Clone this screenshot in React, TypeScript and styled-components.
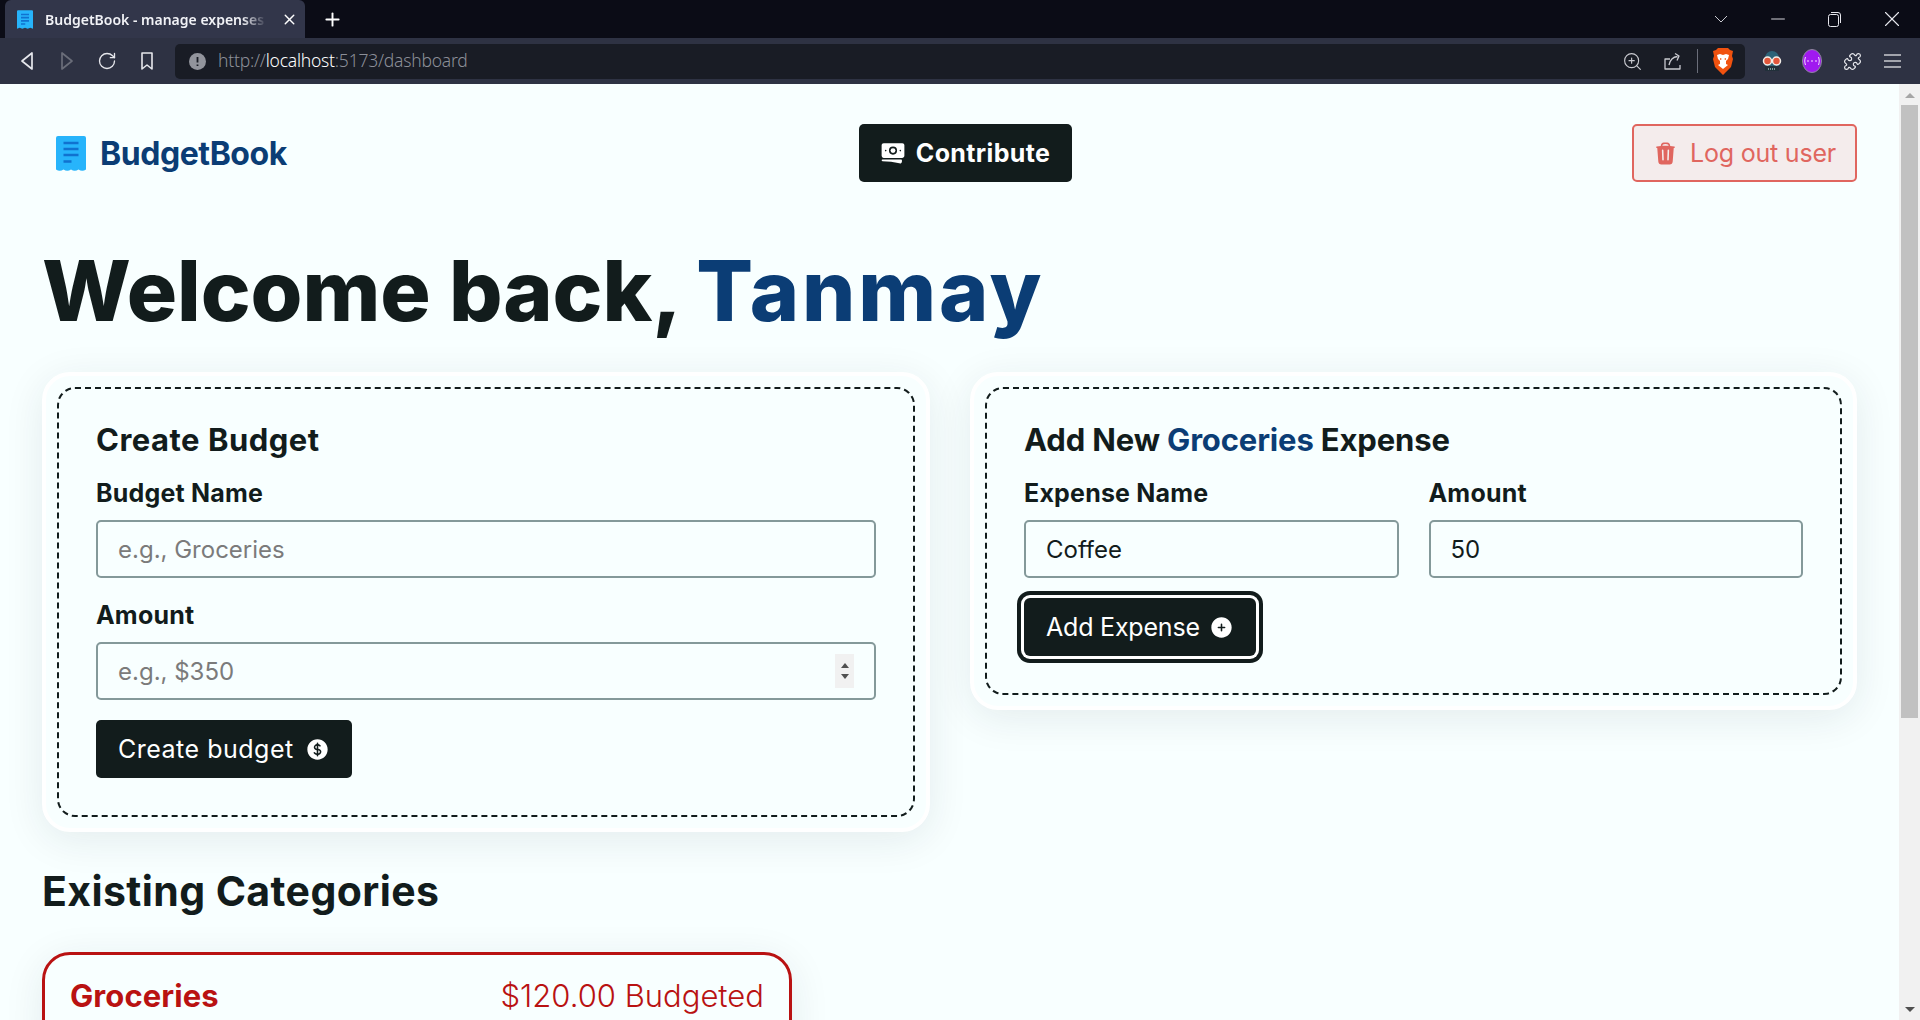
import React from 'react';
import styled, { createGlobalStyle } from 'styled-components';
import { Minus, Plus, Puzzle, RotateCw, X, ZoomIn } from 'lucide-react';
import { HiBanknotes, HiCurrencyDollar, HiPlusCircle, HiTrash } from 'react-icons/hi2';

const ink = '#121c1c';
const navy = '#0b3d75';
const paper = '#f8ffff';
const danger = '#b91212';

const Global = createGlobalStyle`
  html, body { margin: 0; height: 100%; overflow: hidden; }
  body { font-family: Inter, "Liberation Sans", sans-serif; color: ${ink}; background: ${paper}; }
  * { box-sizing: border-box; }
`;

const Shell = styled.div`height: 1020px; display: flex; flex-direction: column;`;

/* browser chrome */
const TabBar = styled.div`
  height: 38px; flex: none; background: #0b0c16; display: flex; align-items: center; padding-left: 5px; color: #fff;
`;
const Tab = styled.div`
  width: 300px; height: 38px; background: #32364a; border-radius: 6px 6px 0 0; display: flex; align-items: center;
  padding: 0 7px 0 12px; gap: 12px;
`;
const TabTitle = styled.span`
  flex: 1; overflow: hidden; white-space: nowrap; font: 600 14px "Noto Sans", sans-serif; color: #f1f2f6;
  mask-image: linear-gradient(90deg, #000 88%, transparent 99%);
`;
const NewTab = styled.span`display: flex; margin-left: 17px;`;
const WindowControls = styled.div`margin-left: auto; display: flex; align-items: center; color: #e8e8ee;`;
const WindowSlot = styled.span`width: 57px; display: flex; justify-content: center;`;
const ToolBar = styled.div`
  height: 46px; flex: none; background: #2e3243; display: flex; align-items: center; padding-left: 7px; color: #e6e7ec;
`;
const NavIcons = styled.div`display: flex; align-items: center; width: 168px;`;
const IconSlot = styled.span`width: 40px; display: flex; justify-content: center; align-items: center;`;
const UrlBar = styled.div`
  width: 1570px; height: 35px; background: #191c25; border-radius: 5px; display: flex; align-items: center;
  padding: 0 12px 0 14px; gap: 12px;
`;
const UrlText = styled.span`font: 300 17.5px "Noto Sans", sans-serif; color: #8c8f98; letter-spacing: -0.22px; white-space: nowrap; position: relative; top: -1px; b { font-weight: 300; color: #fff; }`;
const UrlTools = styled.div`margin-left: auto; display: flex; align-items: center; gap: 15px; color: #c9cad0;`;
const ZoomSlot = styled.span`display: flex; margin-right: 6px;`;
const Divider = styled.span`width: 1px; height: 24px; background: #6b6e7a;`;
const Extensions = styled.div`display: flex; align-items: center; margin-left: 7px;`;

/* page */
const Body = styled.div`flex: 1; display: flex; min-height: 0;`;
const Page = styled.main`flex: 1; min-width: 0; overflow: hidden; background: ${paper}; padding: 0 42px;`;
const ScrollTrack = styled.div`
  width: 21px; flex: none; background: #f1f1f1; display: flex; flex-direction: column; align-items: center; padding: 21px 2px 0;
`;
const ScrollThumb = styled.div`width: 17px; height: 613px; background: #c1c1c1;`;
const ScrollArrow = styled.span<{ $up?: boolean }>`
  width: 0; height: 0; border-left: 5px solid transparent; border-right: 5px solid transparent;
  ${p => p.$up ? `border-bottom: 5px solid #a6a6a6; margin-top: -12px; margin-bottom: 7px;` : `border-top: 5px solid #505050; margin-top: auto; margin-bottom: 8px;`}
`;

const Nav = styled.nav`display: flex; align-items: center; justify-content: space-between; padding-top: 40px;`;
const Brand = styled.a`
  display: flex; align-items: center; gap: 14px; padding-left: 14px; width: 256px; font-weight: 700; font-size: 32px;
  letter-spacing: -0.45px; color: ${navy};
`;
const BaseButton = styled.button`
  display: inline-flex; align-items: center; border: none; border-radius: 5px; background: ${ink}; color: #fff;
  font-family: inherit; cursor: pointer; flex: none;
`;
const ContributeButton = styled(BaseButton)`
  width: 213px; height: 58px; justify-content: center; gap: 10px; font-weight: 700; font-size: 25px; letter-spacing: 0.35px;
`;
const LogoutButton = styled(BaseButton)`
  width: 225px; height: 58px; justify-content: center; gap: 12px; background: #f4ecec; border: 2.5px solid #e0665f;
  color: #e0665f; font-size: 25px; font-weight: 400; letter-spacing: -0.2px;
`;

const Heading = styled.h1`
  margin: 63px 0 35px; font-size: 84px; line-height: 1.1; font-weight: 800; letter-spacing: -0.1px; white-space: nowrap;
  span { color: ${navy}; letter-spacing: 2.8px; }
`;
const Columns = styled.div`display: grid; grid-template-columns: 888px 887px; gap: 40px; align-items: start;`;
const Card = styled.section`
  padding: 11px; border: 4px solid #fff; border-radius: 28px; background: ${paper};
  box-shadow: 0 8px 40px rgba(18, 40, 60, 0.09);
`;
const Dashed = styled.div`border: 2px dashed ${ink}; border-radius: 18px; padding: 35px 37px 37px; display: flex; flex-direction: column; gap: 24px;`;
const CardTitle = styled.h2<{ $tight?: boolean }>`
  margin: 0; font-size: 31px; line-height: 32px; font-weight: 700; letter-spacing: ${p => (p.$tight ? '-0.15px' : '0.5px')};
  span { color: ${navy}; }
`;
const Field = styled.label`display: flex; flex-direction: column; gap: 14px; flex: 1; min-width: 0;`;
const FieldLabel = styled.span`font-size: 25px; line-height: 26px; font-weight: 700; letter-spacing: 0.2px;`;
const FieldRow = styled.div`display: flex; gap: 30px;`;
const InputWrap = styled.div`position: relative;`;
const Input = styled.input`
  display: block; width: 100%; height: 58px; padding: 0 20px; border: 2px solid #84999a; border-radius: 5px; background: ${paper};
  font: 400 24px Inter, sans-serif; color: ${ink}; outline: none;
  &::placeholder { color: #7b7b7b; opacity: 1; }
  &::-webkit-inner-spin-button { display: none; }
`;
const Spinner = styled.span`
  position: absolute; right: 22px; top: 50%; transform: translateY(-50%); width: 19px; height: 34px; background: #f1f1f1;
  display: flex; flex-direction: column; align-items: center; justify-content: center; gap: 6px;
`;
const SpinArrow = styled.i<{ $down?: boolean }>`
  width: 0; height: 0; border-left: 4.500px solid transparent; border-right: 4.500px solid transparent;
  ${p => p.$down ? 'border-top: 5px solid #505050;' : 'border-bottom: 5px solid #505050;'}
`;
const SubmitButton = styled(BaseButton)<{ $focused?: boolean }>`
  align-self: flex-start; height: 58px; margin-top: -4px; padding: 0 22px; font-size: 25px; font-weight: 400;
  gap: ${p => (p.$focused ? '9px' : '11px')};
  letter-spacing: ${p => (p.$focused ? '-0.2px' : '0.5px')};
  ${p => p.$focused ? `box-shadow: 0 0 0 3px #fff, 0 0 0 7px ${ink}; border-radius: 6px;` : ''}
`;

const SectionTitle = styled.h2`margin: 37px 0 38px; font-size: 41px; line-height: 1.1; font-weight: 700; letter-spacing: 0.4px;`;
const BudgetCard = styled.article`
  width: 750px; height: 200px; border: 3px solid ${danger}; border-radius: 28px; padding: 19px 25px; color: ${danger};
  background: ${paper}; box-shadow: 0 8px 40px rgba(18, 40, 60, 0.09);
`;
const BudgetHead = styled.div`display: flex; justify-content: space-between; align-items: center;`;
const BudgetName = styled.h3`margin: 0; font-size: 31px; line-height: 1.4; font-weight: 700; letter-spacing: 0.1px;`;
const BudgetTotal = styled.p`margin: 0; font-size: 31px; line-height: 1.4; font-weight: 300; letter-spacing: 0;`;

const ReceiptLogo = () => (
  <svg width="30" height="35" viewBox="0 0 30 35" fill="none">
    <path d="M2 0h26a2 2 0 0 1 2 2v31.500c-2.500 1.800-5 1.800-7.500 0-2.500 1.800-5 1.800-7.500 0-2.500 1.800-5 1.800-7.500 0-2.500 1.800-5 1.800-7.500 0V2a2 2 0 0 1 2-2z" fill="#27b4fb" />
    <path d="M7.500 7h15M7.500 13h15M7.500 19h15M7.500 25.500h8" stroke="#1072d0" strokeWidth="2.600" />
  </svg>
);
const TabFavicon = () => (
  <svg width="16" height="19" viewBox="0 0 30 35" fill="none">
    <path d="M2 0h26a2 2 0 0 1 2 2v33l-5-2-5 2-5-2-5 2-5-2-5 2V2a2 2 0 0 1 2-2z" fill="#27b4fb" />
    <path d="M7.500 8h15M7.500 14h15M7.500 20h15M7.500 26h8" stroke="#1072d0" strokeWidth="3" />
  </svg>
);
const BackIcon = ({ flip, dim }: { flip?: boolean; dim?: boolean }) => (
  <svg width="14" height="20" viewBox="0 0 14 20" fill="none" stroke={dim ? '#6a6d79' : '#e6e7ec'} strokeWidth="1.700" strokeLinejoin="round" style={{ transform: flip ? 'scaleX(-1)' : undefined }}>
    <path d="M12 2v16L2 10z" />
  </svg>
);
const BookmarkIcon = () => (
  <svg width="14" height="20" viewBox="0 0 14 20" fill="none" stroke="#e6e7ec" strokeWidth="1.600" strokeLinejoin="round">
    <path d="M2 2h10v16l-5-4-5 4z" />
  </svg>
);
const AlertDot = () => (
  <svg width="17" height="17" viewBox="0 0 17 17">
    <circle cx="8.500" cy="8.500" r="8.500" fill="#92949c" />
    <path d="M8.500 4v5.500M8.500 11.500v1.500" stroke="#191c25" strokeWidth="1.800" />
  </svg>
);
const ShareIcon = () => (
  <svg width="18" height="18" viewBox="0 0 18 18" fill="none" stroke="#c9cad0" strokeWidth="1.300" strokeLinejoin="round">
    <path d="M6 7H1v10h15v-4M5 13C6 8 9 5 13.500 4.500M11 1.500l4 2.500-2 4.500" />
  </svg>
);
const BraveIcon = () => (
  <svg width="20" height="27" viewBox="0 0 20 27">
    <path d="M5 0h10l2 2 3 1-1 5 1 3-2 8-5 5-3 3-3-3-5-5-2-8 1-3-1-5 3-1z" fill="#f1520f" />
    <path d="M4 7l3-1 3 1 3-1 3 1-1 4-2 2v3l2 1-5 4-5-4 2-1v-3l-2-2z" fill="#fff" />
    <path d="M7 10l2 1-2 1zM13 10l-2 1 2 1z" fill="#f1520f" />
  </svg>
);
const GogglesIcon = () => (
  <svg width="20" height="24" viewBox="0 0 20 24">
    <path d="M3 22V9a7 7 0 0 1 14 0v13z" fill="#2d6378" />
    <path d="M3 17h14v5H3z" fill="#22303a" />
    <circle cx="5.500" cy="12" r="4" fill="#e2573b" stroke="#f3efe9" strokeWidth="1.500" />
    <circle cx="14.500" cy="12" r="4" fill="#e2573b" stroke="#f3efe9" strokeWidth="1.500" />
    <path d="M6 20h8" stroke="#cfe" strokeWidth="1.200" strokeDasharray="1 1" />
  </svg>
);
const PurpleIcon = () => (
  <svg width="20" height="24" viewBox="0 0 20 24">
    <ellipse cx="10" cy="12" rx="9.500" ry="11.500" fill="#a019f0" stroke="#8d8a9c" strokeWidth="1" />
    <path d="M5 12h2M13 12h2M9 12h2" stroke="#f4dcff" strokeWidth="1.200" />
    <path d="M3.500 8c-1 3-1 5 0 8M16.500 8c1 3 1 5 0 8" stroke="#f4dcff" strokeWidth="1" fill="none" />
  </svg>
);
const RestoreIcon = () => (
  <svg width="13" height="15" viewBox="0 0 13 15" fill="none" stroke="#e8e8ee" strokeWidth="1">
    <rect x="0.500" y="2.500" width="10" height="12" rx="2" />
    <path d="M3 .5h7a2.500 2.500 0 0 1 2.500 2.500v8" />
  </svg>
);
const MenuIcon = () => (
  <svg width="17" height="14" viewBox="0 0 17 14" stroke="#c9cad0" strokeWidth="1.500">
    <path d="M0 1h17M0 7h17M0 13h17" />
  </svg>
);
const ChevronThin = () => (
  <svg width="14" height="8" viewBox="0 0 14 8" fill="none" stroke="#c9cad0" strokeWidth="1">
    <path d="M1 1l6 6 6-6" />
  </svg>
);

export default function App() {
  return (
    <Shell>
      <Global />
      <TabBar>
        <Tab>
          <TabFavicon />
          <TabTitle>BudgetBook - manage expenses and budgets</TabTitle>
          <X size={17} strokeWidth={2} />
        </Tab>
        <NewTab><Plus size={21} strokeWidth={2.200} /></NewTab>
        <WindowControls>
          <WindowSlot><ChevronThin /></WindowSlot>
          <WindowSlot><Minus size={22} strokeWidth={1} /></WindowSlot>
          <WindowSlot><RestoreIcon /></WindowSlot>
          <WindowSlot><X size={26} strokeWidth={1} /></WindowSlot>
        </WindowControls>
      </TabBar>
      <ToolBar>
        <NavIcons>
          <IconSlot><BackIcon /></IconSlot>
          <IconSlot><BackIcon flip dim /></IconSlot>
          <IconSlot><RotateCw size={20} strokeWidth={1.600} /></IconSlot>
          <IconSlot><BookmarkIcon /></IconSlot>
        </NavIcons>
        <UrlBar>
          <AlertDot />
          <UrlText>http://<b>localhost</b>:5173/dashboard</UrlText>
          <UrlTools>
            <ZoomSlot><ZoomIn size={21} strokeWidth={1.300} /></ZoomSlot>
            <ShareIcon />
            <Divider />
            <BraveIcon />
          </UrlTools>
        </UrlBar>
        <Extensions>
          <IconSlot><GogglesIcon /></IconSlot>
          <IconSlot><PurpleIcon /></IconSlot>
          <IconSlot><Puzzle size={19} strokeWidth={1.500} /></IconSlot>
          <IconSlot><MenuIcon /></IconSlot>
        </Extensions>
      </ToolBar>
      <Body>
        <Page>
          <Nav>
            <Brand><ReceiptLogo />BudgetBook</Brand>
            <ContributeButton><HiBanknotes size={26} />Contribute</ContributeButton>
            <LogoutButton><HiTrash size={25} />Log out user</LogoutButton>
          </Nav>
          <Heading>Welcome back, <span>Tanmay</span></Heading>
          <Columns>
            <Card>
              <Dashed>
                <CardTitle>Create Budget</CardTitle>
                <Field>
                  <FieldLabel>Budget Name</FieldLabel>
                  <InputWrap><Input placeholder="e.g., Groceries" /></InputWrap>
                </Field>
                <Field>
                  <FieldLabel>Amount</FieldLabel>
                  <InputWrap>
                    <Input type="number" placeholder="e.g., $350" />
                    <Spinner><SpinArrow /><SpinArrow $down /></Spinner>
                  </InputWrap>
                </Field>
                <SubmitButton>Create budget<HiCurrencyDollar size={25} /></SubmitButton>
              </Dashed>
            </Card>
            <Card>
              <Dashed>
                <CardTitle $tight>Add New <span>Groceries</span> Expense</CardTitle>
                <FieldRow>
                  <Field>
                    <FieldLabel>Expense Name</FieldLabel>
                    <InputWrap><Input defaultValue="Coffee" /></InputWrap>
                  </Field>
                  <Field>
                    <FieldLabel>Amount</FieldLabel>
                    <InputWrap><Input defaultValue="50" /></InputWrap>
                  </Field>
                </FieldRow>
                <SubmitButton $focused>Add Expense<HiPlusCircle size={25} /></SubmitButton>
              </Dashed>
            </Card>
          </Columns>
          <SectionTitle>Existing Categories</SectionTitle>
          <BudgetCard>
            <BudgetHead>
              <BudgetName>Groceries</BudgetName>
              <BudgetTotal>$120.00 Budgeted</BudgetTotal>
            </BudgetHead>
          </BudgetCard>
        </Page>
        <ScrollTrack>
          <ScrollArrow $up />
          <ScrollThumb />
          <ScrollArrow />
        </ScrollTrack>
      </Body>
    </Shell>
  );
}
